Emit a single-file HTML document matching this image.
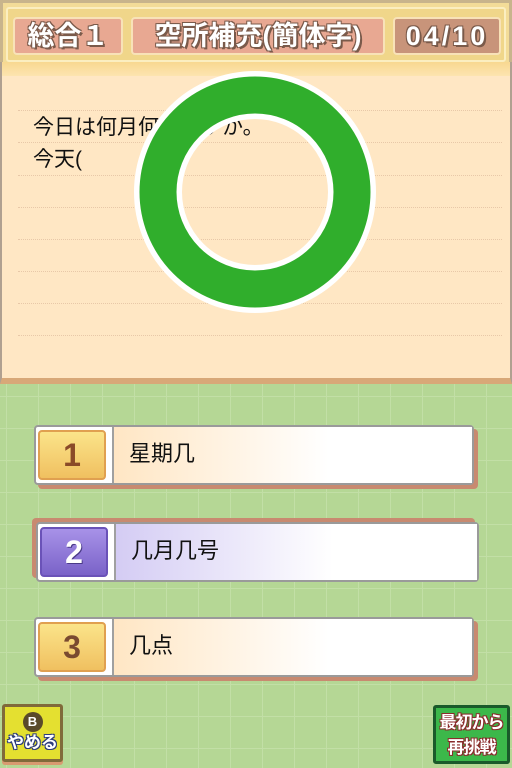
<!DOCTYPE html>
<html><head><meta charset="utf-8"><style>
*{margin:0;padding:0;box-sizing:border-box}
html,body{width:512px;height:768px;overflow:hidden}
body{position:relative;font-family:"Liberation Sans","Noto Sans CJK JP",sans-serif;
background-color:#b5d795;
background-image:linear-gradient(#c2dfa6 1px,transparent 1px),linear-gradient(90deg,#c2dfa6 1px,transparent 1px);
background-size:32px 32px;background-position:6px 12px}
.abs{position:absolute}
#hdr{left:0;top:0;width:512px;height:64px;background:#f3dc98;border:3px solid #c8b48c;border-bottom:none}
#hdr .in{position:absolute;left:3px;top:4px;right:3px;bottom:2px;border:2px solid #fbeec0;border-radius:3px;background:#f0d68a}
.lab{position:absolute;top:14px;height:38px;border:2px solid #f8e2b8;border-radius:4px;color:#fff;font-weight:bold;font-size:27px;line-height:34px;text-align:center;white-space:nowrap;
text-shadow:2px 2px 0 #7a5a4a,-1px -1px 0 #7a5a4a,1px -1px 0 #7a5a4a,-1px 1px 0 #7a5a4a}
#panel{left:0;top:62px;width:512px;height:322px;background:#ffe7c4;border-left:2px solid #b0a090;border-right:2px solid #b0a090;border-bottom:6px solid #d8a878}
#panel .top{position:absolute;left:0;right:0;top:0;height:14px;background:linear-gradient(#f8d890,#fde4b0)}
.dl{position:absolute;left:16px;right:8px;border-top:1px dotted #e8c8a8}
.q{position:absolute;left:31px;font-size:21px;color:#111;line-height:24px;white-space:nowrap}
.opt{position:absolute;height:60px;border:2px solid #9a9a9a;border-radius:4px;background:#fff;box-shadow:4px 4px 0 #c88a70}
.opt .bd{position:absolute;left:2px;top:3px;width:68px;height:50px;border-radius:4px;font-weight:bold;font-size:32px;line-height:46px;text-align:center}
.opt .tx{position:absolute;left:76px;top:0;right:0;bottom:0;border-left:2px solid #a0a0a0;font-size:22px;line-height:54px;padding-left:15px;color:#111}
</style></head><body>
<div id="hdr" class="abs"><div class="in"></div>
<div class="lab" style="left:10px;width:110px;background:#e8a892">総合１</div>
<div class="lab" style="left:128px;width:254px;background:#e8a892">空所補充(簡体字)</div>
<div class="lab" style="left:390px;width:108px;background:#c8947a;letter-spacing:3px">04/10</div>
</div>
<div id="panel" class="abs"><div class="top"></div>
<div class="dl" style="top:48px"></div><div class="dl" style="top:80px"></div><div class="dl" style="top:113px"></div><div class="dl" style="top:145px"></div><div class="dl" style="top:177px"></div><div class="dl" style="top:209px"></div><div class="dl" style="top:241px"></div><div class="dl" style="top:273px"></div>
<div class="q" style="top:54px">今日は何月何日ですか。</div>
<div class="q" style="top:86px">今天(　　　　)?</div>
</div>
<svg class="abs" style="left:0;top:0" width="512" height="400"><circle cx="255" cy="192" r="97" fill="none" stroke="#fff" stroke-width="48"/><circle cx="255" cy="192" r="97" fill="none" stroke="#30ae2c" stroke-width="37"/></svg>

<div class="opt" style="left:34px;top:425px;width:440px">
<div class="bd" style="background:linear-gradient(#fbe48a,#f0c060);color:#8a4a28;border:2px solid #e0a050">1</div>
<div class="tx" style="background:linear-gradient(90deg,#ffe6c4,#fff 60%)">星期几</div></div>
<div class="opt" style="left:36px;top:522px;width:443px;box-shadow:-4px -4px 0 #c88a70">
<div class="bd" style="background:linear-gradient(#a892e8,#7a62c8);color:#fff;border:2px solid #6a52b8;text-shadow:1px 1px 0 #4a3a88">2</div>
<div class="tx" style="background:linear-gradient(90deg,#d4ccf4,#fff 60%)">几月几号</div></div>
<div class="opt" style="left:34px;top:617px;width:440px">
<div class="bd" style="background:linear-gradient(#fbe48a,#f0c060);color:#7a4a30;border:2px solid #e0a050">3</div>
<div class="tx" style="background:linear-gradient(90deg,#ffe6c4,#fff 60%)">几点</div></div>

<div class="abs" style="left:2px;top:704px;width:61px;height:58px;background:#e4e030;border:3px solid #806a3a;border-radius:3px;box-shadow:0 3px 0 #d89a70;text-align:center">
<div style="margin:5px auto 0;width:20px;height:20px;border-radius:10px;background:#5a4a2a;color:#fff;font-weight:bold;font-size:13px;line-height:20px">B</div>
<div style="color:#fff;font-weight:bold;font-size:17px;line-height:22px;white-space:nowrap;text-shadow:1px 1px 0 #2a3a7a,-1px -1px 0 #2a3a7a,1px -1px 0 #2a3a7a,-1px 1px 0 #2a3a7a">やめる</div></div>
<div class="abs" style="left:433px;top:705px;width:77px;height:59px;background:#3cb84a;border:3px solid #1a5a2a;border-radius:3px;text-align:center;color:#fff;font-weight:bold;font-size:17px;line-height:25px;padding-top:2px;white-space:nowrap;letter-spacing:-1px;overflow:hidden;text-shadow:1px 1px 0 #8a2a2a,-1px -1px 0 #8a2a2a,1px -1px 0 #8a2a2a,-1px 1px 0 #8a2a2a">最初から<br>再挑戦</div>
</body></html>
